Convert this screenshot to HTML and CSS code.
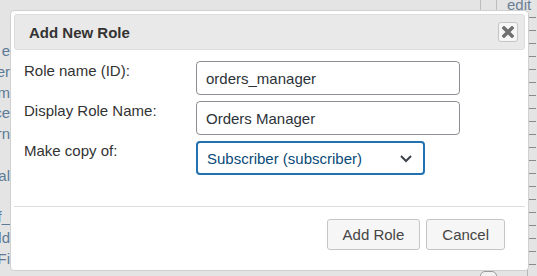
FILE: index.html
```html
<!DOCTYPE html>
<html>
<head>
<meta charset="utf-8">
<link rel="stylesheet" href="styles.css">
</head>
<body>
<div class="page">
  <div class="bg-left">
    <div>e</div><div>er</div><div>m</div><div>ce</div><div>rn</div><div>&nbsp;</div><div>al</div><div>&nbsp;</div><div>_f</div><div>ld</div><div>Fi</div>
  </div>
  <div class="bg-right">
    <div class="bg-box"></div>
    <div class="bg-edit">edit</div>
    <div class="bg-rule"></div>
    <div class="bg-knob"></div>
  </div>
</div>
<div class="dialog">
  <div class="titlebar">
    <span class="title">Add New Role</span>
    <button class="close" aria-label="Close">
      <svg width="12" height="12" viewBox="0 0 12 12"><path d="M2 2L10 10M10 2L2 10" stroke="#6f6f6f" stroke-width="3.4" stroke-linecap="square"/></svg>
    </button>
  </div>
  <div class="content">
    <div class="form">
      <label class="lbl">Role name (ID):</label>
      <input class="field" type="text" value="orders_manager">
      <label class="lbl">Display Role Name:</label>
      <input class="field" type="text" value="Orders Manager">
      <label class="lbl">Make copy of:</label>
      <div class="select">
        <span>Subscriber (subscriber)</span>
        <svg width="14" height="9" viewBox="0 0 14 9"><path d="M2 2L7 7L12 2" fill="none" stroke="#3c434a" stroke-width="2"/></svg>
      </div>
    </div>
  </div>
  <div class="buttonpane">
    <button class="btn">Add Role</button>
    <button class="btn">Cancel</button>
  </div>
</div>
</body>
</html>
```
FILE: styles.css
```css
html, body {
  margin: 0;
  padding: 0;
}
body {
  width: 537px;
  height: 276px;
  background: #e4e4e4;
  font-family: "Liberation Sans", Arial, sans-serif;
  overflow: hidden;
  position: relative;
}
.page {
  height: 276px;
  display: flex;
  justify-content: space-between;
}
.bg-left {
  width: 10px;
  overflow: hidden;
  padding-top: 41px;
  color: #5d7a96;
  font-size: 15px;
  line-height: 20.8px;
  text-align: right;
  white-space: nowrap;
  direction: rtl;
}
.bg-right {
  width: 60px;
  position: relative;
}
.bg-box {
  position: absolute;
  left: 3px;
  top: -4px;
  width: 15px;
  height: 14px;
  border: 1px solid #bdbdbd;
}
.bg-edit {
  position: absolute;
  left: 30px;
  top: -4px;
  font-size: 15px;
  color: #6a7f94;
}
.bg-rule {
  position: absolute;
  left: 50px;
  top: 12px;
  width: 8px;
  height: 264px;
  border-left: 1px solid #b5b5b5;
  background: repeating-linear-gradient(to bottom, transparent 0, transparent 5px, #8a8a8a 5px, #8a8a8a 6px, transparent 6px, transparent 13px);
}
.bg-knob {
  position: absolute;
  left: 3px;
  top: 271px;
  width: 15px;
  height: 12px;
  border: 1px solid #9a9a9a;
  border-radius: 5px;
  background: #f0f0f0;
}
.dialog {
  position: absolute;
  left: 10px;
  top: 10px;
  width: 511px;
  height: 253px;
  padding: 3px;
  background: #fff;
  border: 1px solid #d0d0d0;
  border-radius: 4px;
  display: flex;
  flex-direction: column;
}
.titlebar {
  height: 34px;
  border: 1px solid #dddddd;
  border-radius: 3px;
  background: #e9e9e9;
  display: flex;
  align-items: center;
  justify-content: space-between;
  padding: 0 6px 0 14px;
}
.title {
  font-weight: bold;
  font-size: 15px;
  color: #333;
}
.close {
  width: 20px;
  height: 20px;
  margin: 0;
  padding: 0;
  border: 1px solid #c5c5c5;
  border-radius: 3px;
  background: #f6f6f6;
  display: flex;
  align-items: center;
  justify-content: center;
}
.content {
  flex: 1;
  padding: 11px 0 0 10px;
  border-bottom: 1px solid #dddddd;
}
.form {
  display: grid;
  grid-template-columns: 172px 264px;
  row-gap: 6px;
  align-items: start;
}
.lbl {
  font-size: 15px;
  line-height: 18px;
  color: #333;
  padding-top: 1px;
}
.field {
  box-sizing: border-box;
  width: 264px;
  height: 34px;
  margin: 0;
  padding: 0 9px;
  border: 1px solid #8c8f94;
  border-radius: 4px;
  font-family: "Liberation Sans", Arial, sans-serif;
  font-size: 15px;
  color: #2c3338;
  background: #fff;
}
.select {
  box-sizing: border-box;
  width: 229px;
  height: 34px;
  border: 2px solid #2271b1;
  border-radius: 4px;
  display: flex;
  align-items: center;
  justify-content: space-between;
  padding: 0 10px 0 9px;
  font-size: 15px;
  color: #0a4b78;
}
.buttonpane {
  height: 48px;
  display: flex;
  justify-content: flex-end;
  align-items: flex-start;
  gap: 6px;
  padding: 12px 20px 0 0;
}
.btn {
  height: 31px;
  margin: 0;
  padding: 0 15px;
  border: 1px solid #c5c5c5;
  border-radius: 3px;
  background: #f6f6f6;
  font-family: "Liberation Sans", Arial, sans-serif;
  font-size: 15px;
  color: #454545;
}
```
